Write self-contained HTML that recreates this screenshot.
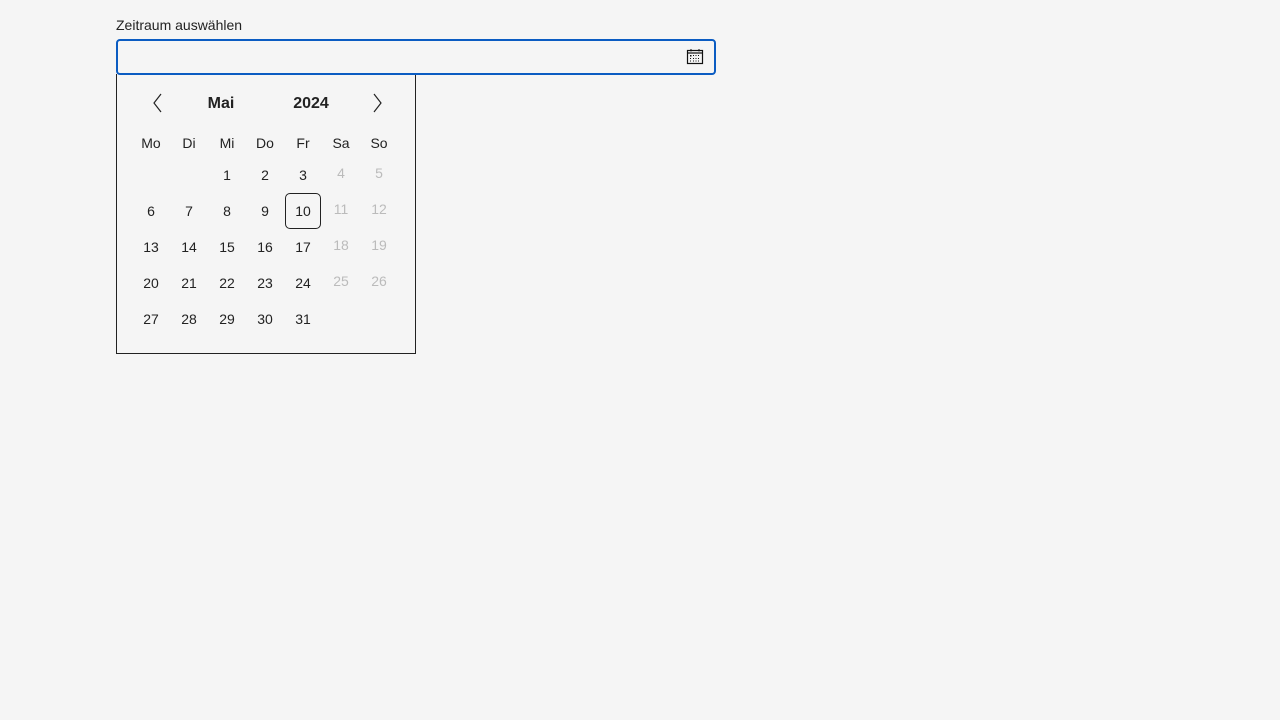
<!DOCTYPE html>
<html><head><meta charset="utf-8"><style>
body{margin:0;background:#f5f5f5;font-family:"Liberation Sans",sans-serif;color:#222;width:1280px;height:720px;position:relative;overflow:hidden}
.a{position:absolute}
.lbl{left:116px;top:17px;font-size:14px;color:#222}
.inp{left:116px;top:39px;width:596px;height:32px;border:2px solid #0b5cc2;border-radius:4px;background:#f5f5f5;z-index:2}
.pop{left:116px;top:74px;width:298px;height:279px;border:1px solid #222;border-top:none}
.c{position:absolute;width:36px;text-align:center;font-size:14px;line-height:16px}
.d{color:#bbb}
.t{border:1px solid #222;border-radius:5px;width:34px;height:34px}
</style></head><body>
<div class="a lbl">Zeitraum auswählen</div>
<div class="a inp">
<svg class="a" style="left:568px;top:7px" width="18" height="18" viewBox="0 0 18 18"><rect x="1.5" y="2.5" width="15" height="13" fill="none" stroke="#111" stroke-width="1.2"/><line x1="1.5" y1="5" x2="16.5" y2="5" stroke="#111" stroke-width="1.2"/><line x1="5" y1="1" x2="5" y2="3.5" stroke="#111"/><line x1="13" y1="1" x2="13" y2="3.5" stroke="#111"/><g fill="#111"><rect x="4" y="7" width="1.5" height="1.5"/><rect x="7" y="7" width="1" height="1"/><rect x="9.5" y="7" width="1" height="1"/><rect x="12" y="7" width="1" height="1"/><rect x="4" y="10" width="1" height="1"/><rect x="7" y="10" width="1" height="1"/><rect x="9.5" y="10" width="1" height="1"/><rect x="12" y="10" width="1" height="1"/><rect x="4" y="12.5" width="1" height="1"/><rect x="7" y="12.5" width="1" height="1"/><rect x="9.5" y="12.5" width="1" height="1"/><rect x="12" y="12.5" width="1" height="1"/></g></svg>
</div>
<div class="a pop"></div>
<svg class="a" style="left:151px;top:93px" width="14" height="20"><path d="M10 1 L3 10 L10 19" fill="none" stroke="#222" stroke-width="1.2"/></svg>
<svg class="a" style="left:371px;top:93px" width="14" height="20"><path d="M3 1 L10 10 L3 19" fill="none" stroke="#222" stroke-width="1.2"/></svg>
<div class="c" style="left:199px;top:95px;width:44px;font-weight:bold;font-size:16px;line-height:18px">Mai</div>
<div class="c" style="left:284px;top:95px;width:54px;font-weight:bold;font-size:16px;line-height:18px">2024</div>
<div class="c" style="left:133px;top:135px">Mo</div><div class="c" style="left:171px;top:135px">Di</div><div class="c" style="left:209px;top:135px">Mi</div><div class="c" style="left:247px;top:135px">Do</div><div class="c" style="left:285px;top:135px">Fr</div><div class="c" style="left:323px;top:135px">Sa</div><div class="c" style="left:361px;top:135px">So</div>
<div class="c" style="left:209px;top:167px">1</div><div class="c" style="left:247px;top:167px">2</div><div class="c" style="left:285px;top:167px">3</div><div class="c d" style="left:323px;top:165px">4</div><div class="c d" style="left:361px;top:165px">5</div>
<div class="c" style="left:133px;top:203px">6</div><div class="c" style="left:171px;top:203px">7</div><div class="c" style="left:209px;top:203px">8</div><div class="c" style="left:247px;top:203px">9</div><div class="c t" style="left:285px;top:193px;line-height:34px">10</div><div class="c d" style="left:323px;top:201px">11</div><div class="c d" style="left:361px;top:201px">12</div>
<div class="c" style="left:133px;top:239px">13</div><div class="c" style="left:171px;top:239px">14</div><div class="c" style="left:209px;top:239px">15</div><div class="c" style="left:247px;top:239px">16</div><div class="c" style="left:285px;top:239px">17</div><div class="c d" style="left:323px;top:237px">18</div><div class="c d" style="left:361px;top:237px">19</div>
<div class="c" style="left:133px;top:275px">20</div><div class="c" style="left:171px;top:275px">21</div><div class="c" style="left:209px;top:275px">22</div><div class="c" style="left:247px;top:275px">23</div><div class="c" style="left:285px;top:275px">24</div><div class="c d" style="left:323px;top:273px">25</div><div class="c d" style="left:361px;top:273px">26</div>
<div class="c" style="left:133px;top:311px">27</div><div class="c" style="left:171px;top:311px">28</div><div class="c" style="left:209px;top:311px">29</div><div class="c" style="left:247px;top:311px">30</div><div class="c" style="left:285px;top:311px">31</div>
</body></html>
